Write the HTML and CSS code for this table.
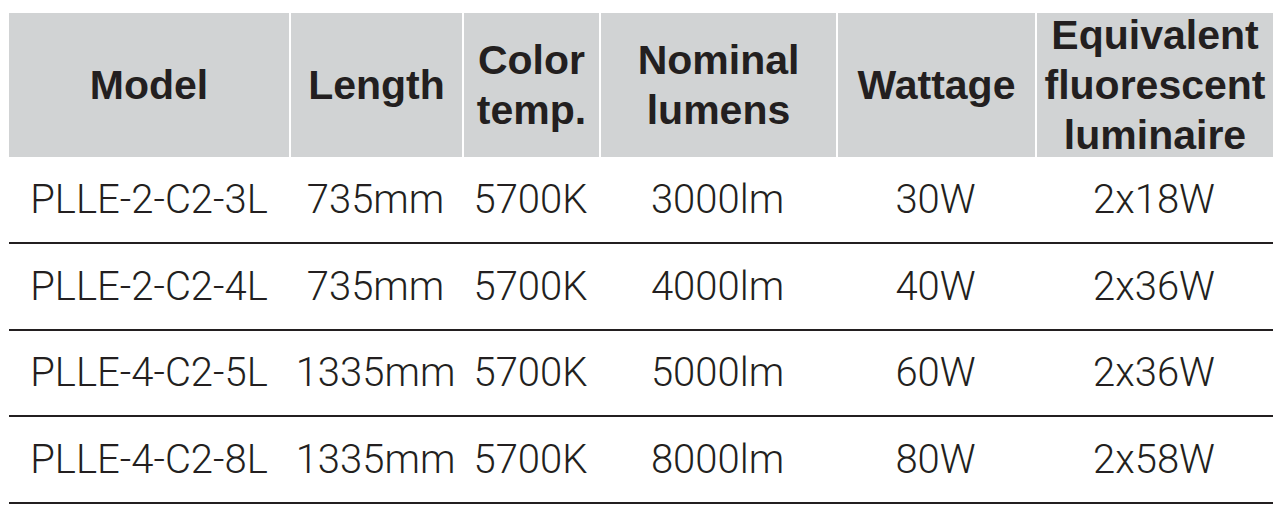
FILE: index.html
```html
<!DOCTYPE html>
<html lang="en">
<head>
  <meta charset="UTF-8">
  <title>PLLE Specifications</title>
  <link rel="stylesheet" href="styles.css">
</head>
<body>
  <table class="specs">
    <thead>
      <tr>
        <th class="c-model">Model</th>
        <th class="c-length">Length</th>
        <th class="c-temp">Color<br>temp.</th>
        <th class="c-lumens">Nominal<br>lumens</th>
        <th class="c-watt">Wattage</th>
        <th class="c-equiv"><div class="tall">Equivalent<br>fluorescent<br>luminaire</div></th>
      </tr>
    </thead>
    <tbody>
      <tr>
        <td>PLLE-2-C2-3L</td>
        <td>735mm</td>
        <td>5700K</td>
        <td>3000lm</td>
        <td>30W</td>
        <td>2x18W</td>
      </tr>
      <tr>
        <td>PLLE-2-C2-4L</td>
        <td>735mm</td>
        <td>5700K</td>
        <td>4000lm</td>
        <td>40W</td>
        <td>2x36W</td>
      </tr>
      <tr>
        <td>PLLE-4-C2-5L</td>
        <td>1335mm</td>
        <td>5700K</td>
        <td>5000lm</td>
        <td>60W</td>
        <td>2x36W</td>
      </tr>
      <tr>
        <td>PLLE-4-C2-8L</td>
        <td>1335mm</td>
        <td>5700K</td>
        <td>8000lm</td>
        <td>80W</td>
        <td>2x58W</td>
      </tr>
    </tbody>
  </table>
</body>
</html>
```

FILE: styles.css
```css
body {
  margin: 0;
  background: #fff;
  color: #231f20;
}
.specs {
  margin: 13px 0 0 9px;
  width: 1264px;
  table-layout: fixed;
  border-collapse: separate;
  border-spacing: 0;
}
.specs th {
  box-sizing: border-box;
  height: 144px;
  padding: 0;
  background: #d1d3d4;
  font-family: "Liberation Sans", Arial, sans-serif;
  font-weight: bold;
  font-size: 41px;
  line-height: 50px;
  text-align: center;
  vertical-align: middle;
  border-left: 2px solid #fff;
}
.specs th.c-model { border-left: 0; width: 280px; }
.c-length { width: 173px; }
.c-temp { width: 137px; }
.c-lumens { width: 237px; }
.c-watt { width: 199px; }
.c-equiv { width: 238px; }
.tall {
  margin: -3px 0;
}
.specs td {
  height: 84.75px;
  padding: 0 4px;
  font-family: Roboto, "Liberation Sans", sans-serif;
  font-weight: 300;
  font-size: 40px;
  text-align: center;
  vertical-align: middle;
  white-space: nowrap;
  border-bottom: 2px solid #231f20;
}
```
